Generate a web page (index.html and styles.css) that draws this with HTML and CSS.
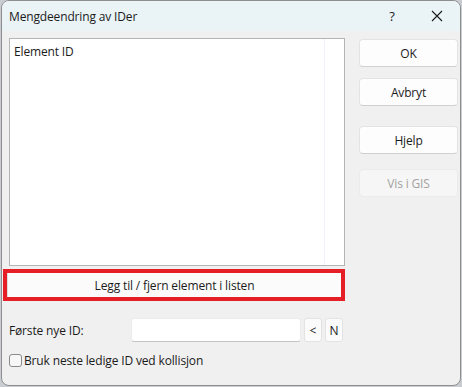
FILE: index.html
```html
<!DOCTYPE html>
<html lang="no">
<head>
  <meta charset="UTF-8" />
  <title>Mengdeendring av IDer</title>
  <link rel="stylesheet" href="styles.css">
</head>
<body>

  <div class="window">
    <div class="titlebar">
      <span class="title">Mengdeendring av IDer</span>
      <span class="title-btn help">?</span>
      <span class="title-btn close">
        <svg width="12" height="12" viewBox="0 0 12 12"><path d="M1 1 L11 11 M11 1 L1 11" stroke="#1a1a1a" stroke-width="1.1" fill="none"/></svg>
      </span>
    </div>

    <div class="content">
      <!-- venstre del -->
      <div class="left">
        <div class="listbox">
          <div class="list-items">
            <div class="list-item">Element ID</div>
          </div>
          <div class="list-side"></div>
        </div>

        <div class="marked">
          <button class="wide-btn">Legg til / fjern element i listen</button>
        </div>

        <div class="id-row">
          <label class="id-label">Første nye ID:</label>
          <input type="text" class="id-input">
          <button class="small-btn">&lt;</button>
          <button class="small-btn">N</button>
        </div>

        <label class="check-row">
          <span class="checkbox"></span>
          <span>Bruk neste ledige ID ved kollisjon</span>
        </label>
      </div>

      <!-- knapper -->
      <div class="right">
        <button class="btn btn-ok">OK</button>
        <button class="btn btn-cancel">Avbryt</button>
        <button class="btn btn-help">Hjelp</button>
        <button class="btn btn-gis" disabled>Vis i GIS</button>
      </div>
    </div>
  </div>

</body>
</html>
```

FILE: styles.css
```css
body {
  margin: 0;
  background: #c9ccd0;
  font-family: 'Open Sans', 'Noto Sans', sans-serif;
  font-size: 12px;
  letter-spacing: -0.15px;
  color: #1b1b1b;
}

.window {
  margin-left: 1px;
  width: 458px;
  height: 384px;
  background: #f0f0f0;
  border: 1px solid #8e8e8e;
  border-radius: 8px;
  overflow: hidden;
}

.titlebar {
  height: 30px;
  background: #eaf4f7;
  display: flex;
  align-items: center;
  padding-left: 7px;
}

.title {
  flex: 1;
  font-size: 12px;
}

.title-btn {
  display: flex;
  align-items: center;
  justify-content: center;
  width: 44px;
  height: 30px;
}

.help {
  font-size: 13px;
}

.close {
  width: 46px;
}

.content {
  display: flex;
  padding: 7px 2px 0 7px;
}

.left {
  width: 336px;
}

.listbox {
  height: 226px;
  background: #fff;
  border: 1px solid #b4b4b4;
  display: flex;
}

.list-items {
  flex: 1;
  padding: 4px 4px;
}

.list-item {
  line-height: 17px;
}

.list-side {
  width: 19px;
  border-left: 1px solid #eef2f6;
}

.marked {
  margin: 3px 0 0 -6px;
  height: 24px;
  border: 4px solid #e61e25;
  display: flex;
}

.wide-btn {
  flex: 1;
  font-family: inherit;
  font-size: 12px;
  letter-spacing: inherit;
  color: #1b1b1b;
  background: #fbfbfb;
  border: none;
  border-left: 1px solid #dcdcdc;
  padding: 0;
}

.id-row {
  display: flex;
  align-items: center;
  margin-top: 17px;
  height: 24px;
}

.id-label {
  width: 122px;
}

.id-input {
  width: 170px;
  height: 24px;
  padding: 0 4px;
  box-sizing: border-box;
  border: 1px solid #ececec;
  border-bottom-color: #c4c4c4;
  border-radius: 3px;
  background: #fff;
  font-family: inherit;
}

.small-btn {
  margin-left: 3px;
  width: 18px;
  height: 24px;
  padding: 0;
  background: #fbfbfb;
  border: 1px solid #e3e3e3;
  border-radius: 3px;
  font-family: inherit;
  font-size: 12px;
  color: #1b1b1b;
}

.check-row {
  display: flex;
  align-items: center;
  margin-top: 10px;
  gap: 2px;
}

.checkbox {
  width: 11px;
  height: 11px;
  border: 1px solid #8a8a8a;
  border-radius: 3px;
  background: #f7f7f7;
}

.right {
  margin-left: 14px;
  width: 99px;
  display: flex;
  flex-direction: column;
}

.btn {
  height: 28px;
  background: #fdfdfd;
  border: 1px solid #e3e3e3;
  border-bottom-color: #d0d0d0;
  border-radius: 4px;
  font-family: inherit;
  font-size: 12px;
  letter-spacing: inherit;
  color: #1b1b1b;
  padding: 0;
}

.btn-ok {
  margin-top: 1px;
}

.btn-cancel {
  margin-top: 11px;
}

.btn-help {
  margin-top: 20px;
}

.btn-gis {
  margin-top: 15px;
  background: #f6f6f6;
  border-color: #ebebeb;
  color: #a2a2a2;
}
```
